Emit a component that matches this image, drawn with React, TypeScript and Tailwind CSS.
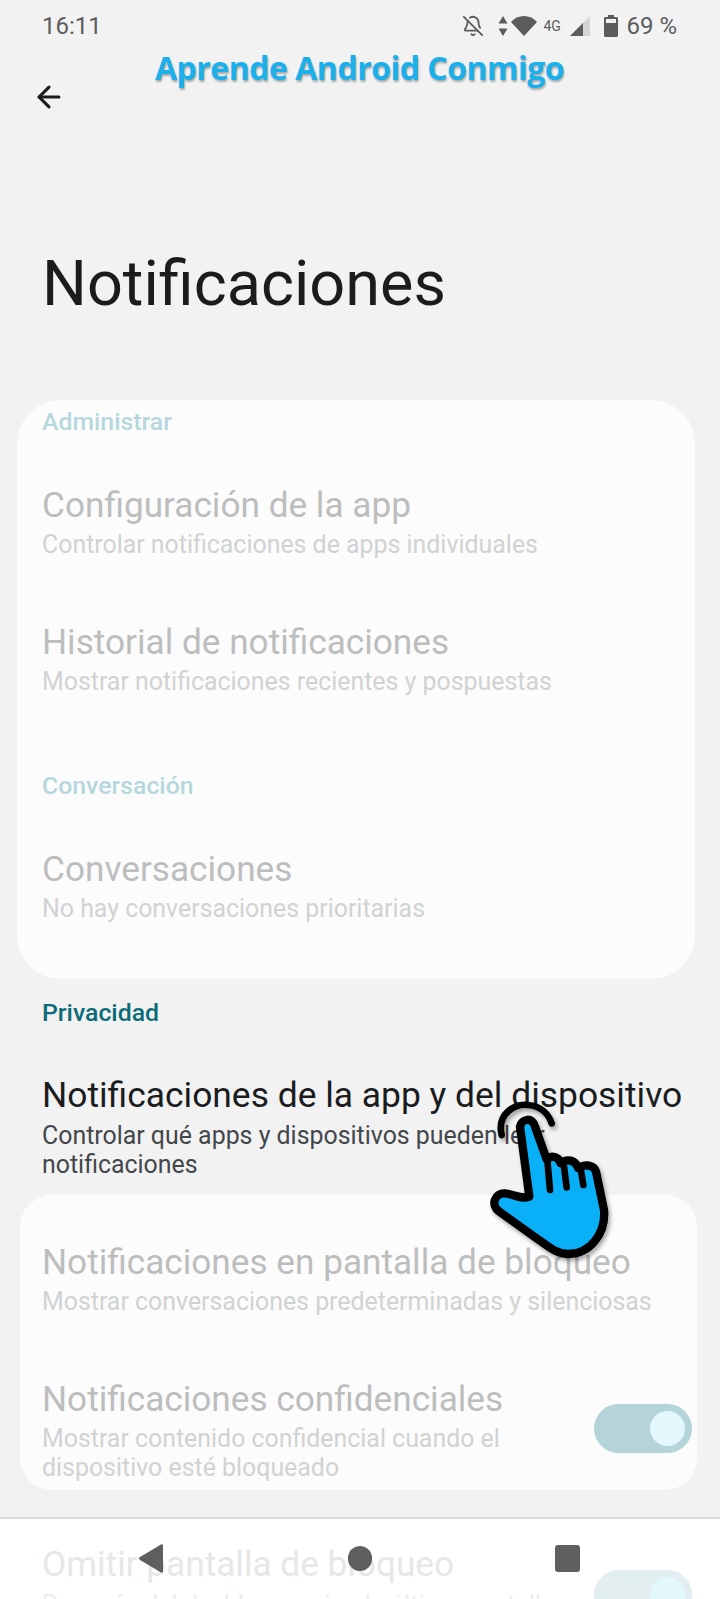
import { ArrowLeft, BellOff } from 'lucide-react';

type RowProps = {
  title: string;
  summary: string;
  titleClass: string;
  summaryClass: string;
  toggle?: boolean;
  className?: string;
};

function Toggle({ className }: { className: string }) {
  return (
    <div className={`flex h-[49px] w-[98px] shrink-0 items-center justify-end rounded-full pr-[7px] ${className}`}>
      <div className="h-[35px] w-[35px] rounded-full bg-[#e2f8fd]" />
    </div>
  );
}

function Row({ title, summary, titleClass, summaryClass, toggle, className }: RowProps) {
  return (
    <div className={`flex items-center justify-between ${className ?? ''}`}>
      <div className="min-w-0">
        <p className={`whitespace-nowrap pt-[1px] text-[35.200px] leading-[42px] ${titleClass}`}>{title}</p>
        <p className={`mt-[4px] text-[24.900px] leading-[29px] ${summaryClass}`}>{summary}</p>
      </div>
      {toggle && <Toggle className="mt-[-2px] bg-[#b4d4da]" />}
    </div>
  );
}

function StatusBar() {
  return (
    <div className="flex h-[52px] items-center justify-between pl-[42px] pr-[43px] text-[24px] text-[#5c5c5c]">
      <span>16:11</span>
      <div className="flex items-center">
        <BellOff className="h-[22px] w-[22px]" strokeWidth={2} />
        <svg className="ml-[14px] h-[20px] w-[10px]" viewBox="0 0 10 20" fill="currentColor">
          <path d="M5 0l4.500 7.500h-9zM5 20L.5 12.500h9z" />
        </svg>
        <svg className="ml-[3px] h-[20px] w-[26px]" viewBox="0 0 26 20" fill="currentColor">
          <path d="M13 20L0 6C3.500 2 8 0 13 0s9.500 2 13 6z" />
        </svg>
        <span className="ml-[6px] w-[18px] text-[14px] leading-none">4G</span>
        <svg className="ml-[9px] h-[20px] w-[20px]" viewBox="0 0 20 20">
          <path d="M0 20L20 0v20z" fill="#d4d4d4" />
          <path d="M0 20L13 7v13z" fill="currentColor" />
        </svg>
        <svg className="ml-[14px] h-[22px] w-[14px]" viewBox="0 0 14 22" fill="currentColor">
          <path d="M4 0h6v2h2.500c.8 0 1.500.7 1.500 1.500v17c0 .8-.7 1.500-1.500 1.500h-11C.7 22 0 21.300 0 20.500v-17C0 2.700.7 2 1.500 2H4z" />
          <rect x="2" y="4" width="10" height="4" fill="#f2f2f2" />
        </svg>
        <span className="ml-[8px]">69 %</span>
      </div>
    </div>
  );
}

function TapHand() {
  return (
    <svg
      className="absolute left-[440px] top-[1070px] h-[200px] w-[200px] drop-shadow-[2px_3px_2px_rgba(0,0,0,0.35)]"
      viewBox="0 0 600 600"
      fill="none"
      stroke="#000"
      strokeWidth="25"
      strokeLinecap="round"
      strokeLinejoin="round"
    >
      <path d="M185 195C170 130 225 100 265 105C300 108 325 130 335 160" strokeWidth="20" />
      <path
        d="M240 170C245 145 278 140 285 170L320 268C335 255 355 258 362 280C380 265 405 268 415 295C435 280 462 285 468 305L492 420C498 490 450 552 385 552C350 552 325 530 290 505L178 425C150 405 165 368 195 370C220 372 245 390 268 380L240 170Z"
        fill="#0ab0f7"
      />
      <path d="M322 270L330 360M372 290L380 352M423 302L430 345" strokeWidth="20" />
    </svg>
  );
}

export default function App() {
  const fadedTitle = 'text-[#bcbebe]';
  const fadedSummary = 'text-[#d0d3d3]';
  const fadedSection = 'text-[24.800px] leading-[30px] font-medium text-[#b6d7dc]';

  return (
    <div className="relative h-[1599px] w-[720px] overflow-hidden bg-[#f2f2f3] font-[Roboto,sans-serif]">
      <StatusBar />

      <div className="pl-[32px] pt-[28px]">
        <ArrowLeft className="h-[34px] w-[34px] text-[#1a1c1e]" strokeWidth={2.2} />
      </div>

      <h1 className="mt-[132px] pl-[42px] text-[63px] font-normal leading-[76px] text-[#1a1c1e]">Notificaciones</h1>

      <div className="ml-[17px] mt-[78px] h-[579px] w-[678px] rounded-[44px] bg-[#fcfcfc] px-[25px] pt-[7px]">
        <p className={fadedSection}>Administrar</p>
        <Row
          className="mt-[46px]"
          title="Configuración de la app"
          summary="Controlar notificaciones de apps individuales"
          titleClass={fadedTitle}
          summaryClass={fadedSummary}
        />
        <Row
          className="mt-[61px]"
          title="Historial de notificaciones"
          summary="Mostrar notificaciones recientes y pospuestas"
          titleClass={fadedTitle}
          summaryClass={fadedSummary}
        />
        <p className={`mt-[75px] ${fadedSection}`}>Conversación</p>
        <Row
          className="mt-[46px]"
          title="Conversaciones"
          summary="No hay conversaciones prioritarias"
          titleClass={fadedTitle}
          summaryClass={fadedSummary}
        />
      </div>

      <div className="pl-[42px]">
        <p className="mt-[19px] text-[24.800px] font-medium leading-[30px] text-[#0b6b78]">Privacidad</p>
        <p className="mt-[46px] whitespace-nowrap text-[35.400px] leading-[42px] text-[#1a1c1e]">
          Notificaciones de la app y del dispositivo
        </p>
        <p className="mt-[5px] w-[640px] text-[24.900px] leading-[29px] text-[#43474a]">
          Controlar qué apps y dispositivos pueden leer notificaciones
        </p>
      </div>

      <div className="ml-[20px] mt-[16px] h-[295px] w-[677px] rounded-[32px] bg-[#fcfcfc] pl-[22px] pr-[5px] pt-[45px]">
        <Row
          title="Notificaciones en pantalla de bloqueo"
          summary="Mostrar conversaciones predeterminadas y silenciosas"
          titleClass={fadedTitle}
          summaryClass={fadedSummary}
        />
        <Row
          className="mt-[61px]"
          title="Notificaciones confidenciales"
          summary="Mostrar contenido confidencial cuando el dispositivo esté bloqueado"
          titleClass={fadedTitle}
          summaryClass={`${fadedSummary} w-[500px]`}
          toggle
        />
      </div>

      <div className="absolute inset-x-0 bottom-0 h-[82px] border-t-2 border-[#d9d9d9] bg-white">
        <div className="flex items-start justify-between pl-[42px] pr-[28px] pt-[24px]">
          <div>
            <p className="whitespace-nowrap text-[35.200px] leading-[42px] text-[#e6e8e8]">Omitir pantalla de bloqueo</p>
            <p className="mt-[5px] whitespace-nowrap text-[24.900px] leading-[29px] text-[#eceeee]">Después del desbloqueo, ir a la última pantalla</p>
          </div>
          <Toggle className="mt-[27px] bg-[#e3eef0]" />
        </div>
        <div className="absolute left-[139px] top-[25px] h-[29px] w-[24px]">
          <svg viewBox="0 0 24 29" className="h-full w-full" fill="#5f5f5f">
            <path d="M22 0.500c1.200-.5 2 .2 2 1.500v25c0 1.300-.8 2-2 1.500L1 16c-1.300-.8-1.300-2.200 0-3z" />
          </svg>
        </div>
        <div className="absolute left-[348px] top-[27px] h-[25px] w-[24px] rounded-full bg-[#5f5f5f]" />
        <div className="absolute left-[555px] top-[26px] h-[27px] w-[25px] rounded-[3px] bg-[#5f5f5f]" />
      </div>

      <p className="absolute left-[155px] top-[48px] whitespace-nowrap font-['Open_Sans',sans-serif] text-[32px] font-bold leading-[40px] tracking-[-0.5px] text-[#1bb0ec] [text-shadow:1px_2px_2px_rgba(0,0,0,0.3)]">
        Aprende Android Conmigo
      </p>

      <TapHand />
    </div>
  );
}
